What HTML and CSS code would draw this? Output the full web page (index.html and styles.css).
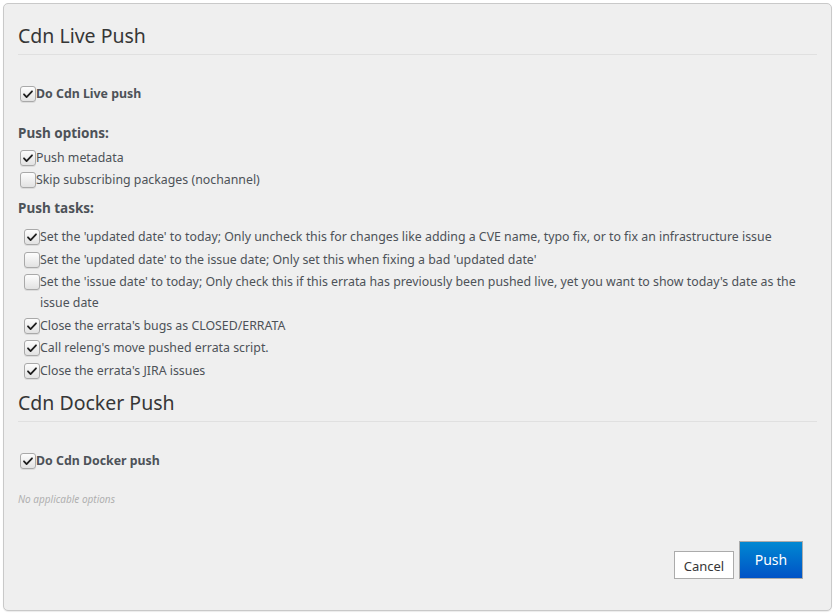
FILE: index.html
```html
<!DOCTYPE html>
<html>
<head>
<meta charset="utf-8">
<link rel="stylesheet" href="styles.css">
</head>
<body>
<div class="panel">
  <section class="section">
    <h3 class="title">Cdn Live Push</h3>
    <label class="check main"><span class="box on"><svg viewBox="0 0 15 15"><path d="M3.2 7.8 L6 10.8 L11.8 4.6"/></svg></span>Do Cdn Live push</label>
    <div class="group-label">Push options:</div>
    <div class="list">
      <label class="check"><span class="box on"><svg viewBox="0 0 15 15"><path d="M3.2 7.8 L6 10.8 L11.8 4.6"/></svg></span>Push metadata</label>
      <label class="check"><span class="box"></span>Skip subscribing packages (nochannel)</label>
    </div>
    <div class="group-label tasks-label">Push tasks:</div>
    <div class="list tasks">
      <label class="check"><span class="box on"><svg viewBox="0 0 15 15"><path d="M3.2 7.8 L6 10.8 L11.8 4.6"/></svg></span><span class="txt">Set the 'updated date' to today; Only uncheck this for changes like adding a CVE name, typo fix, or to fix an infrastructure issue</span></label>
      <label class="check"><span class="box"></span><span class="txt">Set the 'updated date' to the issue date; Only set this when fixing a bad 'updated date'</span></label>
      <label class="check"><span class="box"></span><span class="txt">Set the 'issue date' to today; Only check this if this errata has previously been pushed live, yet you want to show today's date as the issue date</span></label>
      <label class="check"><span class="box on"><svg viewBox="0 0 15 15"><path d="M3.2 7.8 L6 10.8 L11.8 4.6"/></svg></span><span class="txt">Close the errata's bugs as CLOSED/ERRATA</span></label>
      <label class="check"><span class="box on"><svg viewBox="0 0 15 15"><path d="M3.2 7.8 L6 10.8 L11.8 4.6"/></svg></span><span class="txt">Call releng's move pushed errata script.</span></label>
      <label class="check"><span class="box on"><svg viewBox="0 0 15 15"><path d="M3.2 7.8 L6 10.8 L11.8 4.6"/></svg></span><span class="txt">Close the errata's JIRA issues</span></label>
    </div>
  </section>
  <section class="section docker">
    <h3 class="title">Cdn Docker Push</h3>
    <label class="check main"><span class="box on"><svg viewBox="0 0 15 15"><path d="M3.2 7.8 L6 10.8 L11.8 4.6"/></svg></span>Do Cdn Docker push</label>
    <div class="none">No applicable options</div>
  </section>
  <div class="actions">
    <button class="btn cancel">Cancel</button>
    <button class="btn push">Push</button>
  </div>
</div>
</body>
</html>
```
FILE: styles.css
```css
html, body {
  margin: 0;
  padding: 0;
  background: #ffffff;
}
body {
  font-family: "Noto Sans", "Open Sans", sans-serif;
  font-size: 12.35px;
  color: #4d5258;
  padding: 3px 2px 3px 3px;
}
.panel {
  box-sizing: border-box;
  height: 608px;
  border: 1px solid #c9c9c9;
  border-radius: 5px;
  background: #efefef;
  padding: 21px 14px 0 14px;
  display: flex;
  flex-direction: column;
  box-shadow: 0 1px 1px rgba(0,0,0,0.08);
}
.title {
  margin: 0;
  font-size: 19.5px;
  line-height: 22px;
  font-weight: 400;
  color: #363636;
  padding-bottom: 7px;
  border-bottom: 1px solid #e0e0e0;
}
.check {
  display: flex;
  align-items: flex-start;
  line-height: 21px;
}
.box {
  flex: none;
  box-sizing: border-box;
  width: 16px;
  height: 16px;
  margin: 3px 0 0 2px;
  border: 1px solid #a9a9a9;
  border-radius: 3px;
  background: linear-gradient(#fdfdfd, #e2e2e2);
  box-shadow: 0 1px 0 rgba(0,0,0,0.08);
  display: flex;
  align-items: center;
  justify-content: center;
}
.box svg {
  width: 14px;
  height: 14px;
}
.box svg path {
  fill: none;
  stroke: #1e1e1e;
  stroke-width: 1.9;
  stroke-linecap: round;
  stroke-linejoin: round;
}
.main {
  margin-top: 28px;
  font-weight: 700;
  font-size: 12.35px;
}
.group-label {
  margin-top: 19px;
  font-weight: 700;
  font-size: 13.5px;
  line-height: 20px;
}
.list {
  display: flex;
  flex-direction: column;
  gap: 1px;
  margin-top: 4px;
}
.tasks-label {
  margin-top: 8px;
}
.tasks {
  margin-top: 8px;
  padding-left: 4px;
  gap: 1.6px;
}
.docker {
  margin-top: 11px;
}
.docker .main {
  margin-top: 28px;
}
.none {
  margin-top: 21px;
  font-size: 10px;
  font-style: italic;
  color: #b0b0b0;
}
.actions {
  margin-top: auto;
  margin-bottom: 31px;
  margin-right: 14px;
  display: flex;
  justify-content: flex-end;
  align-items: flex-end;
  gap: 5px;
}
.btn {
  font-family: "Noto Sans", "Open Sans", sans-serif;
  border: 1px solid #ababab;
  padding: 0;
  cursor: pointer;
}
.cancel {
  width: 60px;
  height: 28px;
  background: #ffffff;
  color: #363636;
  font-size: 13px;
  padding-top: 2px;
}
.push {
  width: 64px;
  height: 38px;
  background: linear-gradient(#0088d2, #0052c6);
  color: #ffffff;
  font-size: 14px;
  padding-bottom: 2px;
}
```
